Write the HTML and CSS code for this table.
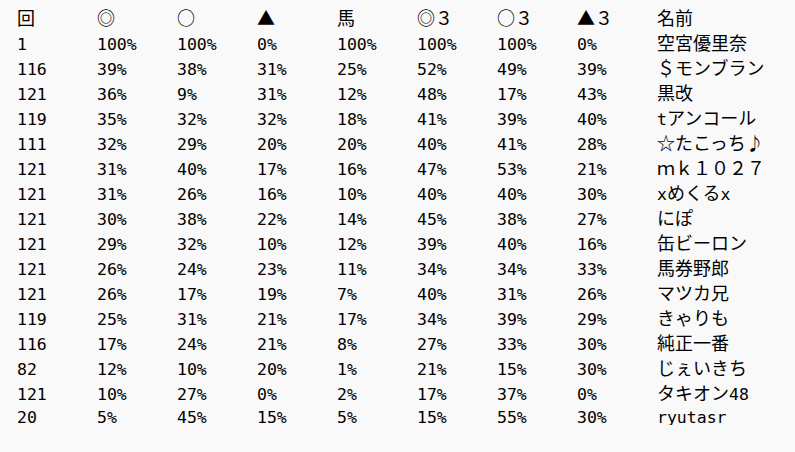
FILE: index.html
```html
<!DOCTYPE html>
<html>
<head>
<meta charset="utf-8">
<link rel="stylesheet" href="styles.css">
</head>
<body>
<div class="table">
  <div class="row hdr"><span>回</span><span>◎</span><span>○</span><span>▲</span><span>馬</span><span>◎３</span><span>○３</span><span>▲３</span><span>名前</span></div>
  <div class="row"><span>1</span><span>100%</span><span>100%</span><span>0%</span><span>100%</span><span>100%</span><span>100%</span><span>0%</span><span class="nm">空宮優里奈</span></div>
  <div class="row"><span>116</span><span>39%</span><span>38%</span><span>31%</span><span>25%</span><span>52%</span><span>49%</span><span>39%</span><span class="nm">＄モンブラン</span></div>
  <div class="row"><span>121</span><span>36%</span><span>9%</span><span>31%</span><span>12%</span><span>48%</span><span>17%</span><span>43%</span><span class="nm">黒改</span></div>
  <div class="row"><span>119</span><span>35%</span><span>32%</span><span>32%</span><span>18%</span><span>41%</span><span>39%</span><span>40%</span><span class="nm"><span class="lat">t</span>アンコール</span></div>
  <div class="row"><span>111</span><span>32%</span><span>29%</span><span>20%</span><span>20%</span><span>40%</span><span>41%</span><span>28%</span><span class="nm">☆たこっち♪</span></div>
  <div class="row"><span>121</span><span>31%</span><span>40%</span><span>17%</span><span>16%</span><span>47%</span><span>53%</span><span>21%</span><span class="nm">ｍｋ１０２７</span></div>
  <div class="row"><span>121</span><span>31%</span><span>26%</span><span>16%</span><span>10%</span><span>40%</span><span>40%</span><span>30%</span><span class="nm"><span class="lat">x</span>めくる<span class="lat">x</span></span></div>
  <div class="row"><span>121</span><span>30%</span><span>38%</span><span>22%</span><span>14%</span><span>45%</span><span>38%</span><span>27%</span><span class="nm">にぽ</span></div>
  <div class="row"><span>121</span><span>29%</span><span>32%</span><span>10%</span><span>12%</span><span>39%</span><span>40%</span><span>16%</span><span class="nm">缶ビーロン</span></div>
  <div class="row"><span>121</span><span>26%</span><span>24%</span><span>23%</span><span>11%</span><span>34%</span><span>34%</span><span>33%</span><span class="nm">馬券野郎</span></div>
  <div class="row"><span>121</span><span>26%</span><span>17%</span><span>19%</span><span>7%</span><span>40%</span><span>31%</span><span>26%</span><span class="nm">マツカ兄</span></div>
  <div class="row"><span>119</span><span>25%</span><span>31%</span><span>21%</span><span>17%</span><span>34%</span><span>39%</span><span>29%</span><span class="nm">きゃりも</span></div>
  <div class="row"><span>116</span><span>17%</span><span>24%</span><span>21%</span><span>8%</span><span>27%</span><span>33%</span><span>30%</span><span class="nm">純正一番</span></div>
  <div class="row"><span>82</span><span>12%</span><span>10%</span><span>20%</span><span>1%</span><span>21%</span><span>15%</span><span>30%</span><span class="nm">じぇいきち</span></div>
  <div class="row"><span>121</span><span>10%</span><span>27%</span><span>0%</span><span>2%</span><span>17%</span><span>37%</span><span>0%</span><span class="nm">タキオン<span class="lat">48</span></span></div>
  <div class="row last"><span>20</span><span>5%</span><span>45%</span><span>15%</span><span>5%</span><span>15%</span><span>55%</span><span>30%</span><span class="nm"><span class="lat">ryutasr</span></span></div>
</div>
</body>
</html>
```
FILE: styles.css
```css
html, body {
  margin: 0;
  padding: 0;
  background: #f9f9f9;
}
body {
  padding: 5px 0 0 17px;
  color: #000;
  font-family: "DejaVu Sans Mono", "Noto Sans CJK JP", monospace;
  font-size: 16.5px;
}
.row {
  display: grid;
  grid-template-columns: repeat(8, 80px) auto;
  align-items: baseline;
  height: 25px;
  line-height: 25px;
  white-space: pre;
}
.row.last {
  height: 20px;
  line-height: 20px;
}
.hdr span,
.nm {
  font-family: "Noto Sans CJK JP", "DejaVu Sans Mono", sans-serif;
  font-size: 18px;
}
.lat {
  font-family: "DejaVu Sans Mono", monospace;
  font-size: 16.5px;
}
```
